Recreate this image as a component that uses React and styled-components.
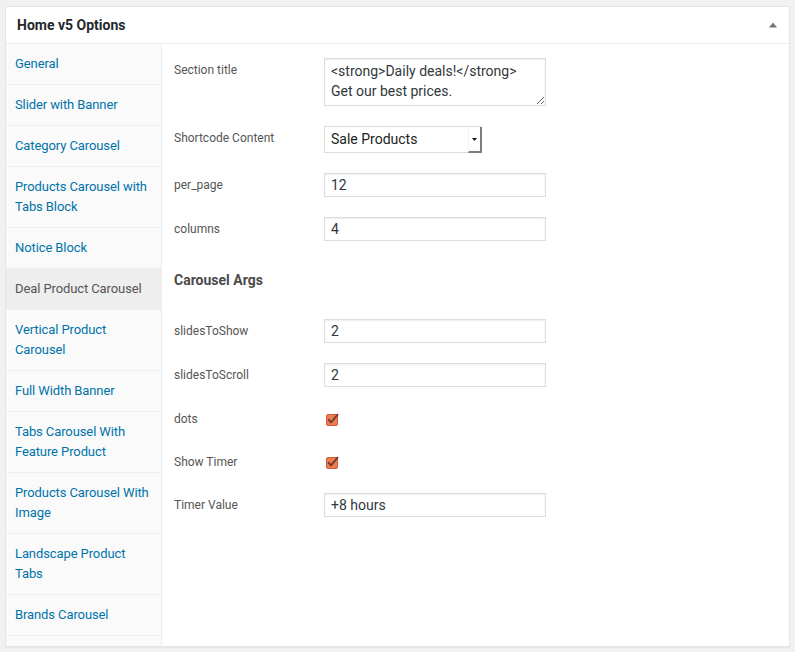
import React from 'react';
import styled, { createGlobalStyle } from 'styled-components';

const Global = createGlobalStyle`
  html, body { margin: 0; padding: 0; background: #f1f1f1; }
  body { font-family: Roboto, "Noto Sans", "Liberation Sans", sans-serif; -webkit-font-smoothing: antialiased; }
  * { box-sizing: border-box; }
`;

const Page = styled.div`
  padding: 6px 5px;
`;

const Panel = styled.section`
  background: #fff;
  border: 1px solid #e5e5e5;
  box-shadow: 0 1px 1px rgba(0, 0, 0, 0.04);
`;

const Header = styled.header`
  display: flex;
  align-items: center;
  justify-content: space-between;
  height: 37px;
  padding: 0 12px 0 11px;
  border-bottom: 1px solid #eee;
`;

const Title = styled.h2`
  margin: 0;
  font-size: 14px;
  font-weight: 700;
  color: #23282d;
  line-height: 20px;
`;

const Toggle = styled.button`
  border: 0;
  background: none;
  padding: 0;
  width: 8px;
  height: 6px;
  display: flex;
  cursor: pointer;
`;

const Body = styled.div`
  display: flex;
  align-items: stretch;
`;

const Sidebar = styled.ul`
  list-style: none;
  margin: 0;
  padding: 0 0 10px;
  width: 156px;
  flex: none;
  background: #fafafa;
  border-right: 1px solid #eee;
`;

const Tab = styled.li`
  padding: 10px 9px;
  font-size: 13px;
  line-height: 20px;
  letter-spacing: -0.1px;
  border-bottom: 1px solid #eee;
  color: ${(p) => (p.$active ? '#555' : '#0073aa')};
  background: ${(p) => (p.$active ? '#eee' : 'transparent')};
  cursor: pointer;
`;

const Content = styled.div`
  flex: 1;
  padding: 4px 12px;
`;

const Row = styled.div`
  display: grid;
  grid-template-columns: 150px 1fr;
  align-items: start;
  padding: ${(p) => (p.$compact ? '10px 0 9px' : '10px 0')};
`;

const Label = styled.label`
  font-size: 12px;
  line-height: 24px;
  color: #555;
`;

const Heading = styled.h3`
  margin: 0;
  padding: 19px 0;
  font-size: 14px;
  line-height: 20px;
  font-weight: 700;
  color: #4a4a4a;
`;

const fieldBase = `
  width: 222px;
  border: 1px solid #ddd;
  box-shadow: inset 0 1px 2px rgba(0, 0, 0, 0.07);
  background: #fff;
  color: #32373c;
  font-family: Roboto, "Noto Sans", sans-serif;
  font-size: 14px;
  outline: none;
  margin: 0;
`;

const TextArea = styled.textarea`
  ${fieldBase}
  display: block;
  height: 48px;
  padding: 2px 6px;
  line-height: 20px;
  resize: vertical;
  overflow: hidden;
`;

const Input = styled.input`
  ${fieldBase}
  display: block;
  height: 24px;
  padding: 0 6px;
  line-height: 22px;
`;

const Select = styled.div`
  display: flex;
  width: 158px;
  height: 27px;
  border: 1px solid #ddd;
  border-right: 0;
  background: #fff;
`;

const SelectValue = styled.span`
  flex: 1;
  padding: 0 6px;
  font-size: 14px;
  line-height: 25px;
  color: #222;
`;

const SelectButton = styled.span`
  width: 14px;
  display: flex;
  align-items: center;
  justify-content: center;
  background: #fff;
  border-left: 1px solid #f4f4f4;
  border-right: 2px solid #7d7d7d;
  border-bottom: 2px solid #7d7d7d;
  margin-bottom: -1px;
  padding-top: 1px;
`;

const CheckCell = styled.div`
  height: 24px;
  padding: 7px 0 0 2px;
`;

function Checkbox() {
  return (
    <svg width="14" height="13" viewBox="0 0 14 13" style={{ display: 'block', overflow: 'visible' }}>
      <rect x="0.5" y="0.5" width="11" height="11" rx="1.5" fill="#ee7c50" stroke="#c85f39" />
      <path d="M2.6 5.6 L5 8.4 L11.6 0.6" fill="none" stroke="#6f3b2b" strokeWidth="1.8" strokeLinecap="round" strokeLinejoin="round" />
    </svg>
  );
}

const tabs = [
  'General',
  'Slider with Banner',
  'Category Carousel',
  'Products Carousel with Tabs Block',
  'Notice Block',
  'Deal Product Carousel',
  'Vertical Product Carousel',
  'Full Width Banner',
  'Tabs Carousel With Feature Product',
  'Products Carousel With Image',
  'Landscape Product Tabs',
  'Brands Carousel',
];

export default function App() {
  return (
    <>
      <Global />
      <Page>
        <Panel>
          <Header>
            <Title>Home v5 Options</Title>
            <Toggle aria-label="Toggle panel">
              <svg width="8" height="6" viewBox="0 0 8 6">
                <polygon points="4,0.5 8,5.5 0,5.5" fill="#72777c" />
              </svg>
            </Toggle>
          </Header>
          <Body>
            <Sidebar>
              {tabs.map((t) => (
                <Tab key={t} $active={t === 'Deal Product Carousel'}>
                  {t}
                </Tab>
              ))}
            </Sidebar>
            <Content>
              <Row>
                <Label>Section title</Label>
                <TextArea defaultValue={'<strong>Daily deals!</strong>\nGet our best prices.'} />
              </Row>
              <Row>
                <Label>Shortcode Content</Label>
                <Select>
                  <SelectValue>Sale Products</SelectValue>
                  <SelectButton>
                    <svg width="5" height="3" viewBox="0 0 5 3">
                      <polygon points="0,0 5,0 2.5,3" fill="#111" />
                    </svg>
                  </SelectButton>
                </Select>
              </Row>
              <Row>
                <Label>per_page</Label>
                <Input defaultValue="12" />
              </Row>
              <Row>
                <Label>columns</Label>
                <Input defaultValue="4" />
              </Row>
              <Heading>Carousel Args</Heading>
              <Row>
                <Label>slidesToShow</Label>
                <Input defaultValue="2" />
              </Row>
              <Row>
                <Label>slidesToScroll</Label>
                <Input defaultValue="2" />
              </Row>
              <Row $compact>
                <Label>dots</Label>
                <CheckCell>
                  <Checkbox />
                </CheckCell>
              </Row>
              <Row $compact>
                <Label>Show Timer</Label>
                <CheckCell>
                  <Checkbox />
                </CheckCell>
              </Row>
              <Row>
                <Label>Timer Value</Label>
                <Input defaultValue="+8 hours" />
              </Row>
            </Content>
          </Body>
        </Panel>
      </Page>
    </>
  );
}
